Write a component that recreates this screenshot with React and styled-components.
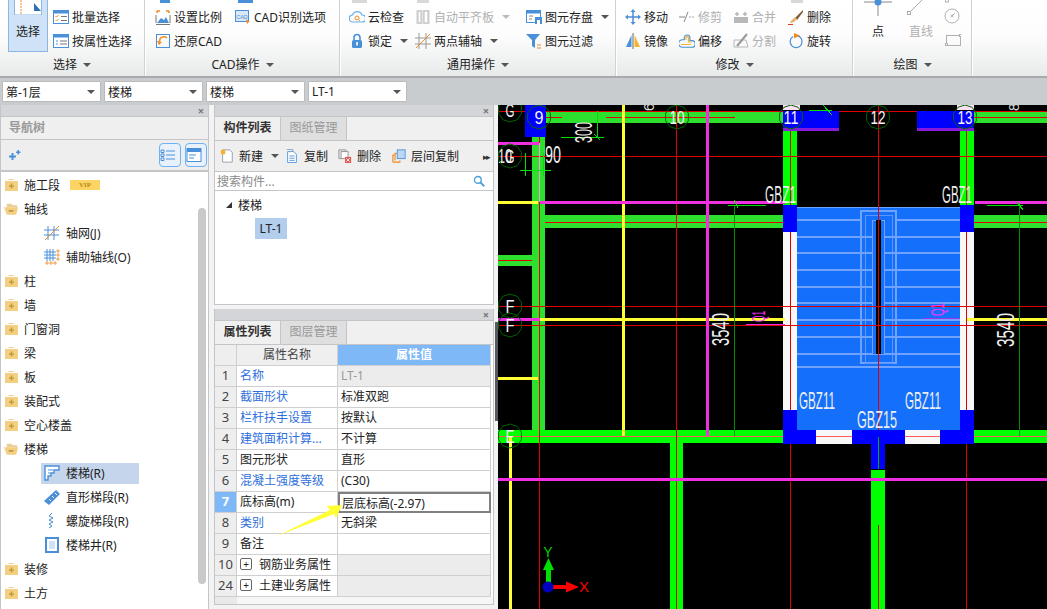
import React from "react";
import styled, { createGlobalStyle } from "styled-components";

const GlobalStyle = createGlobalStyle`
  html, body {
    margin: 0;
    padding: 0;
    overflow: hidden;
    background: #fff;
    font-family: "Noto Sans", "Noto Sans CJK SC", sans-serif;
    font-size: 12px;
    color: #222;
  }
`;

const Page = styled.div`
  position: relative;
  width: 1047px;
  height: 609px;
  display: flex;
  flex-direction: column;
  overflow: hidden;
`;

/* ribbon */
const Ribbon = styled.div`
  height: 76px;
  display: flex;
  overflow: hidden;
  background: linear-gradient(#ffffff 0, #fdfdfd 35px, #e8eaea 76px);
  border-bottom: 2px solid #a8abad;
`;

const Group = styled.div`
  width: ${(p) => p.$width}px;
  display: flex;
  flex-direction: column;
  border-right: ${(p) => (p.$last ? "none" : "1px solid #cfd2d2")};
  box-shadow: ${(p) => (p.$last ? "none" : "1px 0 0 #fff")};
  margin-right: ${(p) => (p.$last ? 0 : 1)}px;
`;

const GroupBody = styled.div`
  height: 54px;
  display: flex;
  padding-left: ${(p) => p.$pad || 0}px;
`;

const GroupLabel = styled.div`
  display: flex;
  align-items: center;
  justify-content: center;
  gap: 6px;
  height: 22px;
  line-height: 20px;
`;

const Caret = styled.span`
  display: inline-block;
  width: 0;
  height: 0;
  border-left: 4px solid transparent;
  border-right: 4px solid transparent;
  border-top: 4px solid ${(p) => p.$color || "#555"};
`;

const Col = styled.div`
  width: ${(p) => p.$width}px;
  display: flex;
  flex-direction: column;
`;

const Stub = styled.div`
  width: ${(p) => p.$width || 12}px;
  height: 3px;
  margin: 0 0 2px ${(p) => p.$left || 3}px;
  background: ${(p) => p.$color || "transparent"};
`;

const Item = styled.div`
  height: 24px;
  display: flex;
  align-items: center;
  gap: 3px;
  white-space: nowrap;
  color: ${(p) => (p.$off ? "#b0b0b0" : "#222")};
  svg { flex: none; }
  ${Caret} { margin-left: 5px; }
`;

const BigButton = styled.div`
  width: ${(p) => p.$width || 40}px;
  height: ${(p) => (p.$active ? 52 : 54)}px;
  box-sizing: border-box;
  display: flex;
  flex-direction: column;
  align-items: center;
  color: ${(p) => (p.$off ? "#b0b0b0" : "#222")};
  background: ${(p) => (p.$active ? "#cfe2f7" : "transparent")};
  border: ${(p) => (p.$active ? "1px solid #8db6e2" : "1px solid transparent")};
  border-top: none;
  margin-right: ${(p) => p.$gap || 0}px;
`;

const BigIcon = styled.div`
  height: 21px;
  margin-bottom: 1px;
`;

/* dropdown bar */
const Toolbar = styled.div`
  height: 27px;
  box-sizing: border-box;
  padding: 3px 2px;
  display: flex;
  gap: 3px;
  background: #c9cccf;
`;

const Select = styled.div`
  width: 99px;
  height: 21px;
  box-sizing: border-box;
  padding: 0 5px 0 3px;
  display: flex;
  align-items: center;
  justify-content: space-between;
  background: #fff;
  border: 1px solid #bbb;
  border-radius: 1px;
`;

/* main area */
const Main = styled.div`
  flex: 1;
  display: flex;
  min-height: 0;
  background: #f3f3f3;
`;

const CloseStrip = styled.div`
  height: 11px;
  display: flex;
  align-items: center;
  justify-content: flex-end;
  padding-right: 4px;
  background: #d3d5d9;
  color: #777;
  font-size: 11px;
  font-weight: bold;
  line-height: 11px;
`;

const NavPanel = styled.div`
  width: 209px;
  margin-right: 5px;
  box-sizing: border-box;
  border-left: 1px solid #c3c5c9;
  border-right: 1px solid #c3c5c9;
  display: flex;
  flex-direction: column;
  background: #fff;
`;

const NavTitle = styled.div`
  height: 22px;
  line-height: 22px;
  padding-left: 8px;
  background: #efefef;
  border-top: 1px solid #c3c5c9;
  border-bottom: 1px solid #c3c5c9;
  color: #999;
  font-weight: bold;
`;

const NavTools = styled.div`
  height: 30px;
  display: flex;
  align-items: center;
  padding: 0 1px 0 6px;
  gap: 4px;
  background: #eeeeee;
  border-bottom: 2px solid #c3c5c9;
  svg:first-child { margin-right: auto; }
`;

const ViewButton = styled.div`
  width: 22px;
  height: 24px;
  box-sizing: border-box;
  display: flex;
  align-items: center;
  justify-content: center;
  border: 1px solid #6fb1f2;
  border-radius: 4px;
  background: #e9f2fc;
`;

const TreeWrap = styled.div`
  position: relative;
  flex: 1;
  padding-top: 1px;
`;

const Scrollbar = styled.div`
  position: absolute;
  left: 197px;
  top: 36px;
  width: 8px;
  height: 376px;
  border-radius: 4px;
  background: #c9c9c9;
`;

const TreeRow = styled.div`
  height: 24px;
  display: flex;
  align-items: center;
  padding-left: ${(p) => (p.$child ? 40 : 3)}px;
`;

const TreeLabel = styled.div`
  height: ${(p) => (p.$child ? 21 : 24)}px;
  width: ${(p) => (p.$child ? "95px" : "auto")};
  display: flex;
  align-items: center;
  gap: ${(p) => (p.$child ? 6 : 5)}px;
  padding-left: ${(p) => (p.$child ? 3 : 0)}px;
  white-space: nowrap;
  background: ${(p) => (p.$selected ? "#c5d5ec" : "transparent")};
`;

const VipBadge = styled.span`
  width: 30px;
  height: 10px;
  margin-left: 5px;
  display: inline-flex;
  align-items: center;
  justify-content: center;
  background: #fdd464;
  color: #b88a1c;
  font-family: "Liberation Serif", serif;
  font-size: 7px;
  font-weight: bold;
`;

const MiddleColumn = styled.div`
  width: 280px;
  display: flex;
  flex-direction: column;
  gap: 4px;
`;

const DockPanel = styled.div`
  height: ${(p) => p.$height}px;
  box-sizing: border-box;
  display: flex;
  flex-direction: column;
  border: 1px solid #c3c5c9;
  border-top: none;
  background: #fff;
`;

const Tabs = styled.div`
  height: 23px;
  display: flex;
  background: #f0f0f0;
  border-top: 1px solid #c3c5c9;
  border-bottom: 1px solid #c3c5c9;
`;

const Tab = styled.div`
  width: 65px;
  text-align: center;
  line-height: 22px;
  font-size: 12px;
  font-weight: ${(p) => (p.$active ? "bold" : "normal")};
  color: ${(p) => (p.$active ? "#333" : "#999")};
  background: ${(p) => (p.$active ? "#f0f0f0" : "#dfdfdf")};
  border-right: 1px solid #c3c5c9;
`;

const ListTools = styled.div`
  height: 30px;
  display: flex;
  align-items: center;
  padding-left: 5px;
  background: #efefef;
  border-bottom: 1px solid #c3c5c9;
`;

const ToolButton = styled.div`
  display: flex;
  align-items: center;
  gap: 5px;
  width: ${(p) => p.$width}px;
  ${Caret} { margin-left: 3px; }
`;

const MoreMark = styled.div`
  margin-left: auto;
  padding-right: 4px;
  font-size: 9px;
  letter-spacing: -2px;
  color: #333;
`;

const SearchBar = styled.div`
  height: 18px;
  display: flex;
  align-items: center;
  justify-content: space-between;
  padding: 0 8px 0 2px;
  color: #8a8a8a;
  border-bottom: 1px solid #c3c5c9;
`;

const ListBody = styled.div`
  flex: 1;
  padding-top: 3px;
`;

const ListGroup = styled.div`
  height: 21px;
  display: flex;
  align-items: center;
  gap: 5px;
  padding-left: 9px;
  margin-bottom: 3px;
`;

const ListItem = styled.div`
  width: 32px;
  height: 21px;
  margin-left: 40px;
  line-height: 21px;
  text-align: center;
  background: #b3cdec;
`;

const PropGrid = styled.div`
  display: grid;
  grid-template-columns: 22px 101px 153px;
  grid-auto-rows: 21px;
`;

const Cell = styled.div`
  box-sizing: border-box;
  display: flex;
  align-items: center;
  padding-left: ${(p) => p.$pad ?? 3}px;
  padding-bottom: 2px;
  gap: 7px;
  white-space: nowrap;
  border-right: 1px solid #cfcfcf;
  border-bottom: 1px solid #cfcfcf;
  color: ${(p) => p.$color || "#222"};
  background: ${(p) => p.$bg || "#fff"};
`;

const NumCell = styled(Cell)`
  justify-content: center;
  padding-left: 0;
  font-size: 13px;
  color: ${(p) => (p.$active ? "#fff" : "#444")};
  font-weight: ${(p) => (p.$active ? "bold" : "normal")};
  background: ${(p) => (p.$active ? "#7eb8f7" : "#eeeeee")};
`;

const HeadCell = styled(Cell)`
  justify-content: center;
  padding-left: 0;
  color: ${(p) => (p.$active ? "#fff" : "#444")};
  font-weight: ${(p) => (p.$active ? "bold" : "normal")};
  background: ${(p) => (p.$active ? "#7eb8f7" : "#efefef")};
`;

const ActiveValue = styled(Cell)`
  border: 2px solid #808080;
  padding-left: 2px;
  padding-bottom: 0;
`;

const Expander = styled.span`
  width: 10px;
  height: 10px;
  margin-left: 0;
  border: 1px solid #666;
  border-radius: 2px;
  display: inline-flex;
  align-items: center;
  justify-content: center;
  font-size: 10px;
  line-height: 10px;
  background: #fff;
`;

const GridFoot = styled.div`
  flex: 1;
  background: linear-gradient(90deg, #e9e9e9 22px, #f6f6f6 22px);
`;

const Splitter = styled.div`
  width: 4px;
  position: relative;
  background: #f3f3f3;
`;

const SplitterGrip = styled.div`
  position: absolute;
  right: 0;
  top: 217px;
  width: 3px;
  height: 99px;
  background: #555a60;
`;

const Canvas = styled.svg`
  display: block;
  flex: 1;
  width: 549px;
  height: 504px;
  background: #000;
`;

const ArrowMark = styled.svg`
  position: absolute;
  left: 270px;
  top: 500px;
  pointer-events: none;
`;

/* icons */
const BLUE = "#4a90d9";
const ORANGE = "#f08a24";
const GRAY = "#b8b8b8";

const Ico = ({ children, size = 16 }) => (
  <svg width={size} height={size} viewBox="0 0 16 16" fill="none">{children}</svg>
);

const BatchIcon = () => (
  <Ico>
    <rect x=".5" y="1.5" width="15" height="13" fill="#fff" stroke={BLUE} />
    <rect x=".5" y="1.5" width="15" height="3" fill={BLUE} />
    <path d="M2.5 7l1 1 2-2M2.5 11l1 1 2-2" stroke={ORANGE} />
    <path d="M8 7.5h6M8 11.500h6" stroke="#777" />
  </Ico>
);
const AttrIcon = () => (
  <Ico>
    <rect x=".5" y="1.500" width="15" height="13" fill="#fff" stroke={BLUE} />
    <rect x=".5" y="1.500" width="15" height="3" fill={BLUE} />
    <path d="M3 8h2M3 11h2" stroke={BLUE} />
    <path d="M7 8h7M7 11h7" stroke="#777" />
  </Ico>
);
const ScaleIcon = () => (
  <Ico>
    <path d="M1 15.500h14M1 14V6M15 14V6" stroke="#777" />
    <path d="M2 14l4-5 3 2 2-3 3 6z" fill={BLUE} />
    <path d="M2 2h3M2 2v2M14 2h-3M14 2v2" stroke={ORANGE} strokeWidth="1.500" />
  </Ico>
);
const RestoreIcon = () => (
  <Ico>
    <rect x="1.500" y="1.500" width="13" height="13" stroke={BLUE} />
    <path d="M12 5a4.500 4.500 0 0 0-7 1l-1 5" stroke={ORANGE} strokeWidth="1.500" />
    <path d="M2 8l2 4 3-3z" fill={ORANGE} />
  </Ico>
);
const CadIcon = () => (
  <Ico>
    <rect x=".5" y="1.500" width="13" height="11" fill="#dbe8f7" stroke={BLUE} />
    <text x="7" y="9.500" fontSize="5.500" textAnchor="middle" fill={BLUE} fontFamily="Liberation Sans">CAD</text>
    <path d="M11 10l4 3-2 .5-1 2z" fill={ORANGE} />
  </Ico>
);
const CloudIcon = () => (
  <Ico>
    <path d="M4 13a3.500 3.500 0 0 1-.5-7A5 5 0 0 1 13 6a3.500 3.500 0 0 1 0 7z" stroke="#68aee8" strokeWidth="1.200" />
    <circle cx="8" cy="9" r="2" stroke={ORANGE} />
    <path d="M9.500 10.500l1.500 1.500" stroke={ORANGE} />
  </Ico>
);
const LockIcon = () => (
  <Ico>
    <path d="M5 7V4.500a3 3 0 0 1 6 0V7" stroke={BLUE} strokeWidth="1.600" />
    <rect x="3" y="7" width="10" height="8" rx="1.500" fill={BLUE} />
    <rect x="7.200" y="9" width="1.600" height="3.500" fill="#fff" />
  </Ico>
);
const AlignIcon = () => (
  <Ico>
    <rect x="1" y="1" width="14" height="14" fill="#e4e4e4" />
    <rect x="3" y="2" width="3" height="12" fill="#fff" stroke={GRAY} />
    <rect x="9" y="2" width="4" height="12" fill="#fff" stroke={GRAY} />
  </Ico>
);
const TwoPointIcon = () => (
  <Ico>
    <path d="M4 0v16M11 0v16M0 5h16M0 11h16" stroke="#999" />
    <path d="M1 15L15 1" stroke={ORANGE} />
  </Ico>
);
const SaveIcon = () => (
  <Ico>
    <rect x=".5" y="1.500" width="14" height="12" fill="#fff" stroke={BLUE} />
    <rect x=".5" y="1.500" width="14" height="3" fill={BLUE} />
    <path d="M3 7h4M3 10h3" stroke="#888" />
    <rect x="9" y="8" width="7" height="7" fill={BLUE} />
    <rect x="11" y="11" width="3" height="4" fill="#fff" />
  </Ico>
);
const FilterIcon = () => (
  <Ico>
    <path d="M0 1h14L9 7v8l-3-2V7z" fill={BLUE} />
    <path d="M11 12h4M11 15h4" stroke={ORANGE} />
  </Ico>
);
const MoveIcon = () => (
  <Ico>
    <path d="M8 2v12M2 8h12" stroke={BLUE} strokeWidth="1.500" />
    <path d="M8 0l2.500 3h-5zM8 16l2.500-3h-5zM0 8l3-2.500v5zM16 8l-3-2.500v5z" fill={BLUE} />
  </Ico>
);
const MirrorIcon = () => (
  <Ico>
    <path d="M6.500 2v12H1z" fill={BLUE} />
    <path d="M9.500 2v12H15z" fill="#f5b32e" />
    <path d="M8 0v16" stroke="#666" />
  </Ico>
);
const TrimIcon = () => (
  <Ico>
    <path d="M0 8h6" stroke="#888" />
    <path d="M10 8h6" stroke="#aaa" strokeDasharray="2 1" />
    <path d="M5 13l4-10" stroke="#888" />
  </Ico>
);
const OffsetIcon = () => (
  <Ico>
    <path d="M5 6V4a3 3 0 0 1 6 0v3h2a2 2 0 0 1 0 7H3a2 2 0 0 1 0-8z" stroke={BLUE} strokeWidth="1.200" transform="translate(.5 1) scale(.95)" />
    <path d="M7 7V4.500a1.300 1.300 0 0 1 2.500 0V9h3M2 11.500h10" stroke="#f5b32e" strokeWidth="1.200" />
  </Ico>
);
const MergeIcon = () => (
  <Ico>
    <rect x="1" y="8" width="14" height="6" fill={GRAY} />
    <path d="M4 3v4M12 3v4M2 5h4M10 5h4" stroke={GRAY} strokeWidth="1.500" />
  </Ico>
);
const SplitIcon = () => (
  <Ico>
    <path d="M1 7h12l2 7H1z" stroke={GRAY} />
    <path d="M4 13L14 1" stroke="#999" strokeWidth="2" />
  </Ico>
);
const EraseIcon = () => (
  <Ico>
    <path d="M15 1L7 9l2 2 6-8z" fill="#7a5a3a" />
    <path d="M7 8l-5 5 1 1 3-1 3-3z" fill="#e8b06a" />
    <path d="M0 15.500h5" stroke="#e04020" />
  </Ico>
);
const RotateIcon = () => (
  <Ico>
    <path d="M5 3.500a6 6 0 1 0 4-.800" stroke={BLUE} strokeWidth="1.200" />
    <path d="M6 0l6 2.500-6 3z" fill={ORANGE} />
  </Ico>
);
const PlusPair = () => (
  <svg width="14" height="12" viewBox="0 0 14 12" fill={BLUE}>
    <path d="M2 6.500h2.500V4h2v2.500H9v2H6.500V11h-2V8.500H2z" />
    <path d="M9 2.500h1.500V1H12v1.500h1.500V4H12v1.500h-1.500V4H9z" />
  </svg>
);
const ListViewIcon = () => (
  <Ico>
    <path d="M1 3h3v2.500H1zM1 7h3v2.500H1zM1 11h3v2.500H1z" stroke={BLUE} />
    <path d="M6 4h9M6 8h9M6 12h9" stroke={BLUE} />
  </Ico>
);
const CardViewIcon = () => (
  <Ico>
    <rect x="1" y="1.500" width="14" height="13" fill="#fff" stroke={BLUE} />
    <rect x="1" y="1.500" width="14" height="3.500" fill={BLUE} />
    <path d="M3 8h7M3 11h5" stroke={BLUE} />
  </Ico>
);

const FolderClosed = () => (
  <svg width="15" height="14" viewBox="0 0 15 14">
    <path d="M4 2l1-1h4l1 1z" fill="#e9cd92" />
    <rect x="1" y="3" width="13" height="10" fill="#f3cf82" />
    <path d="M5 8h5M7.500 5.500v5" stroke="#c59a3e" strokeWidth="1.500" />
  </svg>
);
const FolderOpen = () => (
  <svg width="15" height="14" viewBox="0 0 16 14">
    <path d="M3 3V1.500h5L9 3h5v2H3z" fill="#e9cd92" />
    <path d="M0 5h15l-2 8H3z" fill="#f3cf82" />
    <path d="M5 9h5" stroke="#a98a4a" strokeWidth="1.500" />
  </svg>
);
const GridAxisIcon = () => (
  <Ico>
    <path d="M4 1v14M10 1v14M0 5h15M0 10h15" stroke={BLUE} />
    <path d="M1 15L15 1" stroke={ORANGE} />
  </Ico>
);
const AuxAxisIcon = () => (
  <Ico>
    <path d="M3 0v12M6 0v12M9 0v12M0 3h12M0 6h12M0 9h12" stroke={BLUE} />
    <path d="M13 1h2v2h-2zM13 5h2v2h-2zM13 9h2v2h-2zM2 13h2v2H2zM6 13h2v2H6zM10 13h2v2h-2z" stroke={ORANGE} strokeWidth=".8" />
  </Ico>
);
const StairIcon = () => (
  <Ico>
    <path d="M1 15V1h14v4h-5v3H7v3H4v4z" fill="#fff" stroke={BLUE} strokeWidth="1.400" />
    <path d="M4 5h5M4 8h3" stroke={BLUE} />
  </Ico>
);
const StraightFlightIcon = () => (
  <Ico>
    <path d="M0 12L12 1l4 4L5 16z" fill={BLUE} />
    <path d="M5 10l2 2M8 7l2 2M11 4l2 2" stroke="#fff" />
  </Ico>
);
const SpiralIcon = () => (
  <Ico>
    <path d="M8 0l-3 3 4 2-4 2 4 2-4 2 3 2-3 2" stroke={BLUE} />
  </Ico>
);
const WellIcon = () => (
  <Ico>
    <rect x="2" y="1" width="12" height="14" fill="#fff" stroke={BLUE} strokeWidth="2" />
    <rect x="5" y="4" width="6" height="8" fill="#cfe2f7" />
  </Ico>
);

const NewIcon = () => (
  <Ico size={14}>
    <path d="M3 1h8l3 3v11H3z" fill="#fff" stroke="#8a9aa8" />
    <rect x="1" y="1" width="5" height="5" fill="#f5b32e" />
  </Ico>
);
const CopyIcon = () => (
  <Ico size={14}>
    <path d="M2 .5h7v2" stroke="#7a9cc0" />
    <path d="M3 3h7l3 3v9.500H3z" fill="#fff" stroke={BLUE} />
    <path d="M5 8h6M5 10.500h6M5 13h6" stroke={BLUE} />
  </Ico>
);
const DeleteIcon = () => (
  <Ico size={14}>
    <path d="M1 1h8v2M1 1v10h2" stroke="#888" />
    <rect x="3.500" y="3" width="8" height="8" fill="#fff" stroke="#888" />
    <rect x="8" y="9" width="7" height="7" fill="#e4574f" />
    <path d="M9.500 10.500l4 4M13.500 10.500l-4 4" stroke="#fff" />
  </Ico>
);
const FloorCopyIcon = () => (
  <Ico size={14}>
    <path d="M1 15V7h2M1 15h8v-2" stroke={ORANGE} strokeWidth="1.300" />
    <path d="M3.500 13V5h2" stroke={ORANGE} strokeWidth="1.300" />
    <rect x="6" y="1" width="9" height="10" fill="#bcd7f5" stroke={BLUE} />
  </Ico>
);
const SearchIcon = () => (
  <Ico size={12}>
    <circle cx="6.500" cy="6.500" r="4.500" stroke="#4a9fd9" strokeWidth="1.800" />
    <path d="M10 10l5 5" stroke="#4a9fd9" strokeWidth="2.400" />
  </Ico>
);

/* drawing board, in page coordinates */
const softGreen = [
  [546, 111, 239, 12], [974, 111, 73, 12], [532, 137, 13, 299],
  [545, 215, 238, 13], [974, 215, 73, 13], [498, 255, 34, 11],
];
const brightGreen = [
  [498, 430, 285, 13], [974, 430, 73, 13], [670, 443, 13, 166],
  [783, 131, 14, 74], [960, 131, 14, 74], [871, 470, 14, 139],
];
const whiteWalls = [[783, 232, 14, 178], [960, 232, 14, 178], [816, 430, 36, 14], [905, 430, 35, 14]];
const blueBlocks = [
  [525, 105, 21, 32], [783, 111, 56, 17], [917, 111, 57, 17],
  [783, 205, 14, 27], [960, 205, 14, 27], [783, 410, 14, 34], [960, 410, 14, 34],
  [783, 430, 33, 14], [940, 430, 34, 14], [852, 430, 53, 14], [871, 444, 14, 25],
];
const redLines = [
  [498, 111, 1047, 111], [498, 156, 1047, 156], [498, 306, 1047, 306], [498, 325, 1047, 325],
  [545, 222, 783, 222], [974, 222, 1047, 222], [498, 260, 532, 260],
  [606, 117, 735, 117], [972, 117, 1047, 117], [546, 117, 562, 117],
  [676, 105, 676, 609], [539, 137, 539, 609], [878, 105, 878, 437], [878, 525, 878, 609],
  [790, 111, 790, 609], [966, 111, 966, 609],
];
const pinkLines = [[498, 436, 783, 436], [816, 436, 852, 436], [905, 436, 940, 436], [974, 436, 1047, 436]];
const yellowLines = [
  [623, 105, 623, 436], [510, 436, 510, 609], [498, 202, 538, 202],
  [540, 319, 785, 319], [967, 319, 1047, 319], [498, 378, 538, 378],
];
const magentaLines = [
  [707, 105, 707, 436], [498, 143, 539, 143], [540, 202, 785, 202],
  [975, 202, 1047, 202], [498, 319, 540, 319], [498, 479, 1047, 479],
];
const dimLines = [
  [561, 137, 604, 137], [597, 111, 597, 137], [520, 170, 551, 170], [525, 153, 525, 176], [543, 153, 543, 176],
  [728, 205, 766, 205], [987, 205, 1023, 205], [734, 200, 738, 208], [1017, 202, 1023, 210], [594, 134, 600, 140],
  [809, 110, 832, 110], [823, 105, 832, 115],
];
const stepRows = [220, 237, 253, 270, 287, 303, 320, 337, 354, 367];
const markers = [
  ["G", 510, 110], ["9", 539, 117], ["10", 677, 117], ["G", 510, 156], ["F", 510, 306], ["F", 510, 325],
  ["E", 510, 436], ["11", 791, 117], ["12", 878, 117], ["13", 965, 117],
];

const decagon = (cx, cy, r) =>
  Array.from({ length: 10 }, (_, i) => {
    const a = (Math.PI / 5) * i + Math.PI / 10;
    return `${(cx + r * Math.cos(a)).toFixed(1)},${(cy + r * Math.sin(a)).toFixed(1)}`;
  }).join(" ");

const Bars = ({ data, fill }) =>
  data.map(([x, y, w, h]) => <rect key={`${x}-${y}`} x={x} y={y} width={w} height={h} fill={fill} />);

const Lines = ({ data, stroke, width = 1 }) =>
  data.map(([a, b, c, d]) => (
    <line key={`${a}-${b}-${c}-${d}`} x1={a} y1={b} x2={c} y2={d} stroke={stroke} strokeWidth={width} />
  ));

const CadText = ({ x, y, len, size = 23, rotate, color = "#eeeeee", children }) => (
  <text
    transform={`translate(${x} ${y})${rotate ? " rotate(-90)" : ""}`}
    fontFamily="Liberation Sans, sans-serif"
    fontSize={size}
    textLength={len}
    lengthAdjust="spacingAndGlyphs"
    fill={color}
  >
    {children}
  </text>
);

const DrawingBoard = () => (
  <Canvas viewBox="498 105 549 504" shapeRendering="crispEdges">
    <Bars data={softGreen} fill="#2de02d" />
    <Bars data={brightGreen} fill="#00ff00" />
    <Bars data={whiteWalls} fill="#f8f8f8" />
    <rect x="797" y="207" width="163" height="223" fill="#1470fb" />
    <Lines data={stepRows.map((y) => [797, y, 960, y])} stroke="#6fa3ff" width={2} />
    <rect x="797" y="207" width="163" height="1" fill="#6fa3ff" />
    <g fill="#1470fb" stroke="#6fa3ff" strokeWidth="2">
      <rect x="861" y="211" width="35" height="152" />
    </g>
    <rect x="865" y="215" width="27" height="148" fill="none" stroke="#5f96f5" />
    <Lines data={stepRows.slice(1, 9).map((y) => [861, y, 896, y])} stroke="#6fa3ff" width={2} />
    <rect x="872" y="220" width="12" height="134" fill="#1470fb" stroke="#6fa3ff" />
    <rect x="876" y="220" width="5" height="134" fill="#000" />
    <Lines data={pinkLines} stroke="#ff5a5a" />
    <Lines data={redLines} stroke="#e00000" />
    <Bars data={blueBlocks} fill="#0000ff" />
    <rect x="783" y="128" width="56" height="3" fill="#8a1ad9" />
    <rect x="917" y="128" width="57" height="3" fill="#8a1ad9" />
    <line x1="878" y1="437" x2="878" y2="469" stroke="#00b000" />
    <Lines data={yellowLines} stroke="#ffff33" width={3} />
    <Lines data={magentaLines} stroke="#f030e0" width={3} />
    <line x1="539" y1="143" x2="539" y2="202" stroke="#ff9ad0" />
    <line x1="734" y1="205" x2="734" y2="436" stroke="#008f00" />
    <line x1="1019" y1="205" x2="1019" y2="436" stroke="#008f00" />
    <Lines data={dimLines} stroke="#00e000" />
    <line x1="746" y1="324" x2="785" y2="324" stroke="#f030e0" />
    <line x1="923" y1="318" x2="960" y2="318" stroke="#a030f0" />
    <rect x="783" y="105" width="17" height="5" fill="#fbe0f5" />
    <rect x="957" y="105" width="17" height="5" fill="#fbe0f5" />
    <CadText x={592} y={143} len={21} rotate>300</CadText>
    <CadText x={545} y={163} len={16}>90</CadText>
    <CadText x={498} y={163} len={14} size={20}>10</CadText>
    <CadText x={729} y={346} len={33} rotate>3540</CadText>
    <CadText x={1014} y={347} len={34} rotate>3540</CadText>
    <CadText x={765} y={203} len={31}>GBZ1</CadText>
    <CadText x={942} y={203} len={30}>GBZ1</CadText>
    <CadText x={799} y={409} len={36} size={24}>GBZ11</CadText>
    <CadText x={905} y={409} len={36} size={24}>GBZ11</CadText>
    <CadText x={857} y={428} len={40} size={24}>GBZ15</CadText>
    <CadText x={765} y={322} len={11} size={18} rotate color="#ff30ff">Q1</CadText>
    <CadText x={944} y={316} len={13} size={18} rotate color="#ff30ff">Q1</CadText>
    <text transform="translate(654 111) rotate(-90)" fontFamily="Liberation Sans" fontSize="14" fill="#ddd">6</text>
    <text transform="translate(1019 111) rotate(-90)" fontFamily="Liberation Sans" fontSize="14" fill="#ddd">8</text>
    {markers.map(([t, x, y]) => (
      <g key={`${t}-${x}-${y}`}>
        <polygon points={decagon(x, y, 12)} fill="none" stroke="#006400" shapeRendering="auto" />
        <text
          x={x}
          y={y + 7}
          textAnchor="middle"
          fontFamily="Liberation Sans, sans-serif"
          fontSize="19"
          textLength={t.length > 1 ? 15 : 9}
          lengthAdjust="spacingAndGlyphs"
          fill="#f4f4f4"
          shapeRendering="auto"
        >
          {t}
        </text>
      </g>
    ))}
    <g shapeRendering="auto">
      <rect x="546" y="570" width="5" height="15" fill="#00e000" />
      <polygon points="548.500,558 543,570 554,570" fill="#00e000" />
      <rect x="553" y="585" width="14" height="4" fill="#ff0000" />
      <polygon points="579,587 566,581.500 566,592.500" fill="#ff0000" />
      <circle cx="548" cy="587" r="5.500" fill="#0000c0" />
      <text x="548" y="557" textAnchor="middle" fontFamily="Liberation Sans" fontSize="14" fill="#00d000">Y</text>
      <text x="584" y="592" textAnchor="middle" fontFamily="Liberation Sans" fontSize="15" fill="#ff0000">X</text>
    </g>
  </Canvas>
);

const navTree = [
  { label: "施工段", vip: true },
  { label: "轴线", open: true },
  { label: "轴网(J)", icon: GridAxisIcon },
  { label: "辅助轴线(O)", icon: AuxAxisIcon },
  { label: "柱" }, { label: "墙" }, { label: "门窗洞" }, { label: "梁" }, { label: "板" },
  { label: "装配式" }, { label: "空心楼盖" },
  { label: "楼梯", open: true },
  { label: "楼梯(R)", icon: StairIcon, selected: true },
  { label: "直形梯段(R)", icon: StraightFlightIcon },
  { label: "螺旋梯段(R)", icon: SpiralIcon },
  { label: "楼梯井(R)", icon: WellIcon },
  { label: "装修" }, { label: "土方" },
];

const LINK = "#2f6fdc";
const props = [
  { n: 1, name: "名称", link: true, value: "LT-1", muted: true },
  { n: 2, name: "截面形状", link: true, value: "标准双跑" },
  { n: 3, name: "栏杆扶手设置", link: true, value: "按默认" },
  { n: 4, name: "建筑面积计算...", link: true, value: "不计算" },
  { n: 5, name: "图元形状", value: "直形" },
  { n: 6, name: "混凝土强度等级", link: true, value: "(C30)" },
  { n: 7, name: "底标高(m)", value: "层底标高(-2.97)", active: true },
  { n: 8, name: "类别", link: true, value: "无斜梁" },
  { n: 9, name: "备注", value: "" },
  { n: 10, name: "钢筋业务属性", group: true },
  { n: 24, name: "土建业务属性", group: true },
];

const RibbonEntry = ({ icon: Icon, text, caret, off }) => (
  <Item $off={off}>
    <Icon />
    {text}
    {caret && <Caret $color={off ? "#bbb" : "#555"} />}
  </Item>
);

export default function App() {
  return (
    <Page>
      <GlobalStyle />
      <Ribbon>
        <Group $width={144}>
          <GroupBody $pad={8}>
            <BigButton $active $gap={5}>
              <BigIcon>
                <svg width="28" height="15" viewBox="0 0 28 15">
                  <rect x=".5" y="-2" width="27" height="17" fill="#fff" stroke="#8db6e2" />
                  <path d="M7 0v15" stroke={ORANGE} strokeDasharray="2 1" />
                  <path d="M20 3l7 8h-7z" fill="#2f6fb8" />
                </svg>
              </BigIcon>
              选择
            </BigButton>
            <Col $width={80}>
              <Stub />
              <RibbonEntry icon={BatchIcon} text="批量选择" />
              <RibbonEntry icon={AttrIcon} text="按属性选择" />
            </Col>
          </GroupBody>
          <GroupLabel>选择<Caret /></GroupLabel>
        </Group>
        <Group $width={193}>
          <GroupBody $pad={9}>
            <Col $width={80}>
              <Stub $color={BLUE} $left={5} $width={10} />
              <RibbonEntry icon={ScaleIcon} text="设置比例" />
              <RibbonEntry icon={RestoreIcon} text="还原CAD" />
            </Col>
            <Col $width={95}>
              <Stub $color={BLUE} $left={0} $width={15} />
              <RibbonEntry icon={CadIcon} text="CAD识别选项" />
            </Col>
          </GroupBody>
          <GroupLabel>CAD操作<Caret /></GroupLabel>
        </Group>
        <Group $width={274}>
          <GroupBody $pad={8}>
            <Col $width={66}>
              <Stub $color="#d8d8d8" $left={0} $width={15} />
              <RibbonEntry icon={CloudIcon} text="云检查" />
              <RibbonEntry icon={LockIcon} text="锁定" caret />
            </Col>
            <Col $width={111}>
              <Stub $color="#d8d8d8" $left={2} $width={12} />
              <RibbonEntry icon={AlignIcon} text="自动平齐板" caret off />
              <RibbonEntry icon={TwoPointIcon} text="两点辅轴" caret />
            </Col>
            <Col $width={84}>
              <Stub />
              <RibbonEntry icon={SaveIcon} text="图元存盘" caret />
              <RibbonEntry icon={FilterIcon} text="图元过滤" />
            </Col>
          </GroupBody>
          <GroupLabel>通用操作<Caret /></GroupLabel>
        </Group>
        <Group $width={235}>
          <GroupBody $pad={8}>
            <Col $width={54}>
              <Stub />
              <RibbonEntry icon={MoveIcon} text="移动" />
              <RibbonEntry icon={MirrorIcon} text="镜像" />
            </Col>
            <Col $width={54}>
              <Stub />
              <RibbonEntry icon={TrimIcon} text="修剪" off />
              <RibbonEntry icon={OffsetIcon} text="偏移" />
            </Col>
            <Col $width={55}>
              <Stub />
              <RibbonEntry icon={MergeIcon} text="合并" off />
              <RibbonEntry icon={SplitIcon} text="分割" off />
            </Col>
            <Col $width={50}>
              <Stub $color="#d8d8d8" $left={0} />
              <RibbonEntry icon={EraseIcon} text="删除" />
              <RibbonEntry icon={RotateIcon} text="旋转" />
            </Col>
          </GroupBody>
          <GroupLabel>修改<Caret /></GroupLabel>
        </Group>
        <Group $width={117}>
          <GroupBody $pad={4}>
            <BigButton $gap={3}>
              <BigIcon>
                <svg width="30" height="17" viewBox="0 0 30 17">
                  <path d="M1 2h28M15 2v14" stroke="#888" />
                  <circle cx="15" cy="2" r="3.500" fill={BLUE} />
                </svg>
              </BigIcon>
              点
            </BigButton>
            <BigButton $off>
              <BigIcon>
                <svg width="28" height="17" viewBox="0 0 28 17">
                  <path d="M3.500 11.500L15 0" stroke="#aaa" />
                  <rect x=".5" y="11.500" width="3" height="3" fill="#fff" stroke="#aaa" />
                </svg>
              </BigIcon>
              直线
            </BigButton>
            <Col $width={20}>
              <svg width="20" height="50" viewBox="0 0 20 50" fill="none" stroke="#b0b0b0">
                <rect x="4.500" y="-2" width="3" height="4" />
                <circle cx="11" cy="16" r="7" />
                <circle cx="11" cy="16" r="1" />
                <path d="M11 16l3-3" />
                <rect x="5.500" y="35.500" width="14" height="10" />
                <rect x="4.500" y="43.500" width="2" height="2" fill="#fff" />
                <rect x="18.500" y="34.500" width="2" height="2" fill="#fff" />
              </svg>
            </Col>
          </GroupBody>
          <GroupLabel>绘图<Caret /></GroupLabel>
        </Group>
        <Group $width={74} $last />
      </Ribbon>
      <Toolbar>
        {["第-1层", "楼梯", "楼梯", "LT-1"].map((v, i) => (
          <Select key={i}>{v}<Caret /></Select>
        ))}
      </Toolbar>
      <Main>
        <NavPanel>
          <CloseStrip>×</CloseStrip>
          <NavTitle>导航树</NavTitle>
          <NavTools>
            <PlusPair />
            <ViewButton><ListViewIcon /></ViewButton>
            <ViewButton><CardViewIcon /></ViewButton>
          </NavTools>
          <TreeWrap>
            {navTree.map((row) => (
              <TreeRow key={row.label} $child={!!row.icon}>
                <TreeLabel $child={!!row.icon} $selected={row.selected}>
                  {row.icon ? <row.icon /> : row.open ? <FolderOpen /> : <FolderClosed />}
                  {row.label}
                  {row.vip && <VipBadge>VIP</VipBadge>}
                </TreeLabel>
              </TreeRow>
            ))}
            <Scrollbar />
          </TreeWrap>
        </NavPanel>
        <MiddleColumn>
          <DockPanel $height={200}>
            <CloseStrip>×</CloseStrip>
            <Tabs>
              <Tab $active>构件列表</Tab>
              <Tab>图纸管理</Tab>
            </Tabs>
            <ListTools>
              <ToolButton $width={65}><NewIcon />新建<Caret /></ToolButton>
              <ToolButton $width={53}><CopyIcon />复制</ToolButton>
              <ToolButton $width={54}><DeleteIcon />删除</ToolButton>
              <ToolButton $width={75}><FloorCopyIcon />层间复制</ToolButton>
              <MoreMark>▸▸</MoreMark>
            </ListTools>
            <SearchBar>搜索构件...<SearchIcon /></SearchBar>
            <ListBody>
              <ListGroup>
                <svg width="9" height="9" viewBox="0 0 9 9"><path d="M8 2v6H2z" fill="#333" /></svg>
                楼梯
              </ListGroup>
              <ListItem>LT-1</ListItem>
            </ListBody>
          </DockPanel>
          <DockPanel $height={296}>
            <CloseStrip>×</CloseStrip>
            <Tabs>
              <Tab $active>属性列表</Tab>
              <Tab>图层管理</Tab>
            </Tabs>
            <PropGrid>
              <NumCell />
              <HeadCell>属性名称</HeadCell>
              <HeadCell $active>属性值</HeadCell>
              {props.map((p) => (
                <React.Fragment key={p.n}>
                  <NumCell $active={p.active}>{p.n}</NumCell>
                  {p.group ? (
                    <Cell><Expander>+</Expander>{p.name}</Cell>
                  ) : (
                    <Cell $color={p.link ? LINK : undefined}>{p.name}</Cell>
                  )}
                  {p.active ? (
                    <ActiveValue>{p.value}</ActiveValue>
                  ) : (
                    <Cell
                      $color={p.muted ? "#999" : undefined}
                      $bg={p.muted || p.group ? "#ececec" : undefined}
                    >
                      {p.value}
                    </Cell>
                  )}
                </React.Fragment>
              ))}
            </PropGrid>
            <GridFoot />
          </DockPanel>
        </MiddleColumn>
        <Splitter><SplitterGrip /></Splitter>
        <DrawingBoard />
      </Main>
      <ArrowMark width="80" height="45" viewBox="270 500 80 45">
        <polygon points="277,536 330,510 327,506 342,505 336,518 334,514" fill="#ffff33" />
      </ArrowMark>
    </Page>
  );
}
